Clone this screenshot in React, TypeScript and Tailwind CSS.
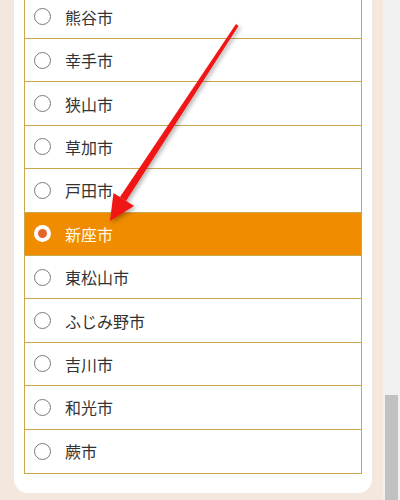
import React from "react";

const cities = [
  "熊谷市",
  "幸手市",
  "狭山市",
  "草加市",
  "戸田市",
  "新座市",
  "東松山市",
  "ふじみ野市",
  "吉川市",
  "和光市",
  "蕨市",
];

const selected = "新座市";

const Arrow = () => (
  <svg
    className="absolute left-0 top-0 pointer-events-none"
    width="400"
    height="500"
    viewBox="0 0 400 500"
  >
    <defs>
      <filter id="sh" x="-20%" y="-20%" width="140%" height="140%">
        <feDropShadow dx="2" dy="2" stdDeviation="2" floodColor="#000" floodOpacity="0.3" />
      </filter>
    </defs>
    <g filter="url(#sh)" fill="#f01414">
      <polygon points="236,24 238.5,26 126,201 120,197" />
      <polygon points="110,221 113.5,193 134,206" />
    </g>
  </svg>
);

const CityRow = ({ name }: { name: string }) => {
  const active = name === selected;
  return (
    <div
      className={`flex items-center h-[43.4px] border-b border-[#c9a84c] last:border-b-0 pl-[9px] ${
        active ? "bg-[#ef8c00]" : "bg-white"
      }`}
    >
      {active ? (
        <span className="flex items-center justify-center w-[17px] h-[17px] rounded-full bg-white">
          <span className="w-[9px] h-[9px] rounded-full bg-[#e3652a]" />
        </span>
      ) : (
        <span className="w-[17px] h-[17px] rounded-full border border-[#7a7a7a] bg-white" />
      )}
      <span
        className={`ml-[14px] text-[16px] ${active ? "text-[#fff8ea]" : "text-[#333]"}`}
      >
        {name}
      </span>
    </div>
  );
};

export default function App() {
  return (
    <div
      className="relative flex w-[400px] h-[500px] overflow-hidden bg-[#f4e7de]"
      style={{ fontFamily: '"Noto Sans CJK JP", "Noto Sans", sans-serif' }}
    >
      <div className="w-[383px] pl-[14px] pr-[11px]">
        <div className="-mt-[4.4px] bg-white rounded-b-[14px] px-[10px] pb-[19px]">
          <div className="border border-t-0 border-[#c9a84c]">
            {cities.map((c) => (
              <CityRow key={c} name={c} />
            ))}
          </div>
        </div>
      </div>
      <div className="w-[17px] bg-[#f1f1f1] px-[2px] pt-[395px]">
        <div className="h-[120px] bg-[#c1c1c1]" />
      </div>
      <Arrow />
    </div>
  );
}
